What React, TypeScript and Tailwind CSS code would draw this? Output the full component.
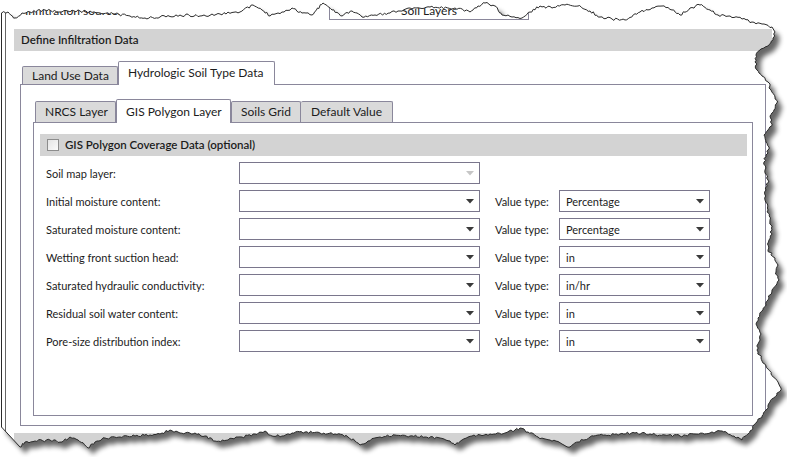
import React from 'react';

type Pt = [number, number];

// torn paper outline, hand-traced anchors
const topEdge: Pt[] = [
  [1.5, 13], [8, 12], [15, 18], [22, 13], [30, 12], [45, 10], [60, 12], [80, 11], [100, 13], [115, 14],
  [130, 16], [145, 18], [160, 17], [180, 15], [200, 16], [220, 14], [240, 12], [253, 5], [262, 10],
  [270, 16], [282, 12], [292, 8], [302, 13], [312, 15], [323, 3], [332, 10], [342, 16], [352, 11],
  [362, 17], [375, 15], [390, 13], [400, 11], [410, 8], [430, 7], [455, 8], [470, 12], [478, 6],
  [485, 3], [495, 6], [502, 15], [512, 17], [522, 18], [530, 12], [540, 6], [552, 8], [565, 5],
  [578, 6], [590, 11], [600, 17], [612, 19], [625, 20], [640, 12], [652, 8], [662, 6], [672, 10],
  [680, 15], [690, 8], [700, 5], [710, 10], [718, 15], [730, 16], [742, 19], [752, 22], [762, 24], [772, 27],
];

const rightEdge: Pt[] = [
  [775, 32], [773, 40], [768, 46], [760, 50], [756, 55], [755, 62], [757, 70], [762, 76], [768, 82],
  [771, 90], [775, 97], [777, 103], [774, 110], [770, 116], [772, 124], [768, 130], [764, 135],
  [766, 142], [769, 147], [766, 155], [764, 162], [765, 170], [768, 180], [766, 190], [765, 200],
  [768, 210], [770, 220], [772, 230], [769, 240], [768, 250], [775, 258], [778, 265], [776, 272],
  [779, 280], [772, 290], [768, 300], [763, 310], [758, 318], [757, 326], [761, 334], [759, 342],
  [757, 350], [761, 358], [766, 366], [771, 374], [778, 382], [781, 388], [777, 395], [770, 402],
  [766, 410], [762, 416], [757, 422], [750, 431], [742, 440],
];

const bottomEdge: Pt[] = ([
  [20, 447], [25, 442], [35, 441], [50, 440], [62, 442], [70, 437], [78, 440], [88, 448], [95, 442],
  [105, 438], [120, 437], [135, 436], [150, 435], [162, 433], [170, 430], [180, 433], [195, 433],
  [205, 436], [215, 441], [228, 440], [242, 437], [255, 434], [265, 431], [272, 436], [282, 436],
  [292, 433], [305, 432], [320, 433], [335, 434], [348, 437], [355, 441], [360, 445], [368, 441],
  [380, 437], [395, 435], [410, 436], [425, 437], [440, 438], [450, 441], [455, 445], [462, 440],
  [472, 436], [490, 434], [505, 433], [515, 430], [520, 428], [528, 432], [538, 437], [550, 440],
  [562, 444], [570, 447], [578, 442], [590, 437], [605, 435], [620, 434], [635, 433], [650, 434],
  [665, 435], [680, 436], [695, 434], [710, 433], [722, 431], [732, 436], [742, 440],
] as Pt[]).reverse();

function rnd(i: number) {
  const s = Math.sin(i * 127.1 + 311.7) * 43758.5453;
  return s - Math.floor(s);
}

function roughen(anchors: Pt[], axis: 'x' | 'y', seed: number): Pt[] {
  const out: Pt[] = [];
  let idx = seed;
  for (let a = 0; a < anchors.length - 1; a++) {
    const [x1, y1] = anchors[a];
    const [x2, y2] = anchors[a + 1];
    const n = Math.max(1, Math.round(Math.hypot(x2 - x1, y2 - y1) / 2));
    for (let k = 0; k < n; k++) {
      const t = k / n;
      let x = x1 + (x2 - x1) * t;
      let y = y1 + (y2 - y1) * t;
      const off = k === 0 ? 0 : (rnd(idx++) - 0.5) * 2.6;
      if (axis === 'y') y += off;
      else x += off;
      out.push([x, y]);
    }
  }
  out.push(anchors[anchors.length - 1]);
  return out;
}

const paperPts = [
  ...roughen(topEdge, 'y', 1),
  ...roughen(rightEdge, 'x', 500),
  ...roughen(bottomEdge, 'y', 900),
  [1.5, 427] as Pt,
];
const paper = 'M' + paperPts.map(([x, y]) => `${x.toFixed(1)} ${y.toFixed(1)}`).join(' L') + ' Z';
const outside = `M0 0H787V457H0Z ${paper}`;

function TornEdge() {
  return (
    <svg className="absolute inset-0 pointer-events-none" width={787} height={457}>
      <defs>
        <clipPath id="outside">
          <path d={outside} clipRule="evenodd" />
        </clipPath>
        <filter id="soft" x="-5%" y="-5%" width="110%" height="110%">
          <feGaussianBlur stdDeviation="2.6" />
        </filter>
      </defs>
      <path d={outside} fill="#fff" fillRule="evenodd" />
      <g clipPath="url(#outside)">
        <path d={paper} transform="translate(5 6)" fill="#000" opacity={0.6} filter="url(#soft)" />
      </g>
      <path d={paper} fill="none" stroke="#2b2b2b" strokeWidth={1} />
    </svg>
  );
}

function Arrow({ disabled }: { disabled?: boolean }) {
  return (
    <svg width="8" height="5" viewBox="0 0 8 5">
      <path d="M0 0H8L4 4.5Z" fill={disabled ? '#c6c6c6' : '#3a3a3a'} />
    </svg>
  );
}

const rows = [
  { label: 'Initial moisture content:', unit: 'Percentage' },
  { label: 'Saturated moisture content:', unit: 'Percentage' },
  { label: 'Wetting front suction head:', unit: 'in' },
  { label: 'Saturated hydraulic conductivity:', unit: 'in/hr' },
  { label: 'Residual soil water content:', unit: 'in' },
  { label: 'Pore-size distribution index:', unit: 'in' },
];

export default function App() {
  return (
    <div className="relative w-[787px] h-[457px] overflow-hidden bg-white text-[11px] leading-none text-[#1c1c1c] font-['Lato','Segoe_UI',sans-serif]">
      <div className="ml-px h-full border-l border-[#333] pl-[3px]">
        <div className="h-full border-l border-[#666] flex flex-col">
          {/* cut-off row above */}
          <div className="shrink-0 flex items-center h-[22px] -mt-[2px] text-[12px]">
            <div className="w-[323px] pl-[19px] pt-[4px]">Infiltration source:</div>
            <div className="w-[200px] h-[22px] border border-[#8a879b] flex items-center justify-center pt-[4px]">Soil Layers</div>
          </div>

          <div className="shrink-0 mt-[9px] ml-[8px] w-[758px] h-[22px] bg-[#d3d3d3] flex items-center pl-[7px] text-[11.5px] font-semibold">
            Define Infiltration Data
          </div>

          <div className="shrink-0 ml-[14px] mt-[10px] w-[746px]">
            <div className="flex items-end h-[23px] pl-[2px] text-[12px]">
              <div className="w-[96px] h-[18px] border border-b-0 border-[#8a879b] bg-[#dadada] rounded-t-[2px] flex items-center pl-[9px]">
                Land Use Data
              </div>
              <div className="relative z-10 w-[157px] h-[24px] -mb-px border border-b-0 border-[#8a879b] bg-white rounded-t-[2px] flex items-center pl-[9px] pb-px">
                Hydrologic Soil Type Data
              </div>
            </div>

            <div className="h-[342px] border border-[#8a879b] px-[12px] pt-[14px]">
              <div className="flex items-end h-[23px] pl-[2px] text-[12px]">
                <div className="w-[81px] h-[21px] border border-b-0 border-[#8a879b] bg-[#dadada] rounded-t-[2px] flex items-center pl-[9px]">
                  NRCS Layer
                </div>
                <div className="relative z-10 w-[115px] h-[24px] -mb-px border border-b-0 border-[#8a879b] bg-white rounded-t-[2px] flex items-center pl-[9px]">
                  GIS Polygon Layer
                </div>
                <div className="w-[70px] h-[21px] border border-b-0 border-[#8a879b] bg-[#dadada] rounded-t-[2px] flex items-center pl-[9px]">
                  Soils Grid
                </div>
                <div className="w-[92px] h-[21px] border border-b-0 border-l-0 border-[#8a879b] bg-[#dadada] rounded-t-[2px] flex items-center pl-[10px]">
                  Default Value
                </div>
              </div>

              <div className="h-[294px] border border-[#8a879b] pl-[6px] pr-[5px] pt-[11px]">
                <div className="h-[22px] bg-[#d3d3d3] flex items-center">
                  <div className="ml-[7px] w-[12px] h-[12px] border border-[#8c8c8c] bg-gradient-to-br from-[#e4e4e4] to-[#fbfbfb]" />
                  <span className="ml-[6px] text-[11.5px] font-semibold">GIS Polygon Coverage Data (optional)</span>
                </div>

                <div className="mt-[6px] flex flex-col gap-[6px]">
                  <div className="flex items-center h-[22px] pl-[6px]">
                    <div className="w-[193px]">Soil map layer:</div>
                    <div className="w-[241px] h-[22px] border border-[#7a768c] bg-white flex items-center justify-end pr-[5px]">
                      <Arrow disabled />
                    </div>
                  </div>
                  {rows.map((r) => (
                    <div key={r.label} className="flex items-center h-[22px] pl-[6px]">
                      <div className="w-[193px]">{r.label}</div>
                      <div className="w-[241px] h-[22px] border border-[#7a768c] bg-white flex items-center justify-end pr-[5px]">
                        <Arrow />
                      </div>
                      <div className="ml-[15px] w-[64px]">Value type:</div>
                      <div className="w-[151px] h-[22px] border border-[#7a768c] bg-white flex items-center justify-between pl-[6px] pr-[5px]">
                        <span>{r.unit}</span>
                        <Arrow />
                      </div>
                    </div>
                  ))}
                </div>
              </div>
            </div>
          </div>

          <div className="shrink-0 mt-[7px] ml-[8px] w-[780px] h-[30px] bg-[#d3d3d3]" />
        </div>
      </div>
      <TornEdge />
    </div>
  );
}
